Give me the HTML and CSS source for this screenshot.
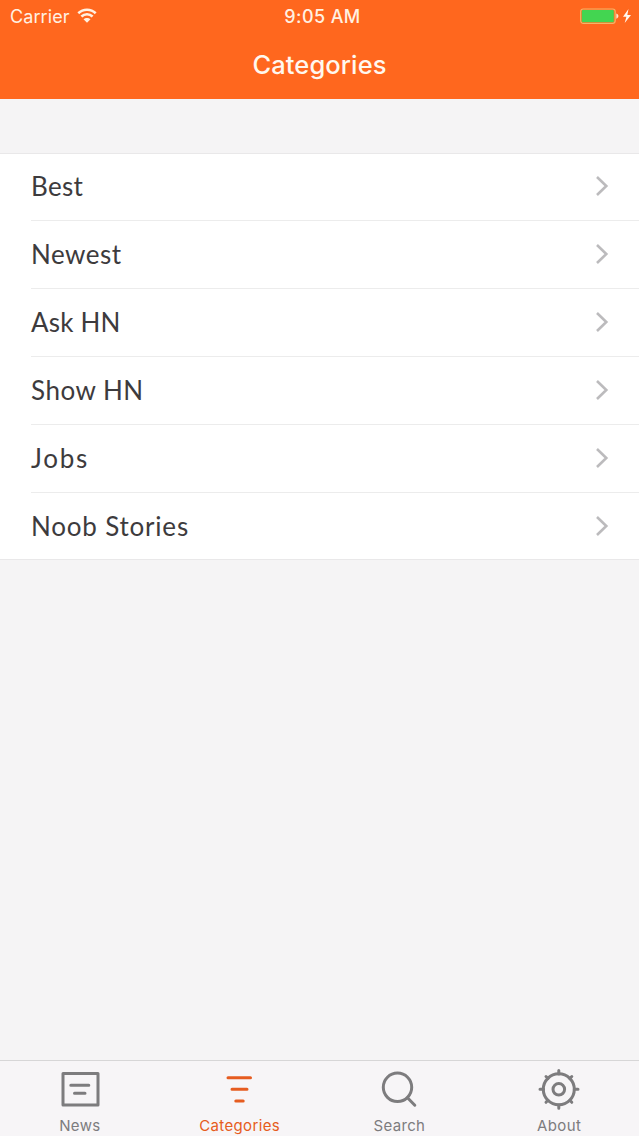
FILE: index.html
```html
<!DOCTYPE html>
<html lang="en">
<head>
<meta charset="utf-8">
<title>Categories</title>
<link rel="stylesheet" href="styles.css">
</head>
<body>
<div class="app">
  <header class="header">
    <div class="status">
      <div class="carrier"><span>Carrier</span>
        <svg class="wifi" width="20" height="15" viewBox="0 0 20 15" fill="none" stroke="currentColor" stroke-width="2.6"><path d="M1.3 5.2C6.2.5 13.800.5 18.700 5.200M4.400 8.500c3.200-3.100 8-3.100 11.200 0"/><path d="M10 14.800 6.500 11.300c2-1.900 5-1.900 7 0Z" fill="currentColor" stroke="none"/></svg>
      </div>
      <div class="time">9:05 AM</div>
      <div class="power">
        <svg width="52" height="17" viewBox="0 0 52 17"><rect x="1.7" y="1" width="34.500" height="14.300" rx="2.500" fill="none" stroke="#f3b568" stroke-width="1.2"/><rect x="2.800" y="2" width="32" height="12.300" rx="1" fill="#43d551"/><path d="M37.300 5.500c2.800 1 2.800 4.200 0 5.200Z" fill="#ffe5cc"/><path d="M49.500 1 44 8.700h3.400L45.700 15 52 6.900h-3.700Z" fill="#fff8f0"/></svg>
      </div>
    </div>
    <h1 class="title">Categories</h1>
  </header>
  <main class="content">
    <ul class="list">
      <li class="row"><span class="label best">Best</span><svg class="chevron" viewBox="0 0 14 22"><path d="m2 2 9.300 9L2 20"/></svg></li>
      <li class="row"><span class="label newest">Newest</span><svg class="chevron" viewBox="0 0 14 22"><path d="m2 2 9.300 9L2 20"/></svg></li>
      <li class="row"><span class="label ask">Ask HN</span><svg class="chevron" viewBox="0 0 14 22"><path d="m2 2 9.300 9L2 20"/></svg></li>
      <li class="row"><span class="label show">Show HN</span><svg class="chevron" viewBox="0 0 14 22"><path d="m2 2 9.300 9L2 20"/></svg></li>
      <li class="row"><span class="label jobs">Jobs</span><svg class="chevron" viewBox="0 0 14 22"><path d="m2 2 9.300 9L2 20"/></svg></li>
      <li class="row"><span class="label noob">Noob Stories</span><svg class="chevron" viewBox="0 0 14 22"><path d="m2 2 9.300 9L2 20"/></svg></li>
    </ul>
  </main>
  <nav class="tabs">
    <div class="tab"><svg class="icon" viewBox="0 0 44 44"><path stroke-linejoin="round" d="M5 6.500h35v31.500H5Z"/><path stroke-linecap="round" d="M12.800 18.300h18M16.500 26.200h10.500"/></svg><span>News</span></div>
    <div class="tab active"><svg class="icon" viewBox="0 0 44 44"><path stroke-linecap="round" d="M10 10.800h22.500M14 22.300h15M17.800 34h7.400"/></svg><span>Categories</span></div>
    <div class="tab"><svg class="icon" viewBox="0 0 44 44"><circle cx="20.500" cy="20.300" r="14.200"/><path stroke-linecap="round" d="m30.500 30.700 7.300 7.500"/></svg><span>Search</span></div>
    <div class="tab"><svg class="icon" viewBox="0 0 44 44"><circle cx="21.800" cy="22.300" r="15.500"/><circle cx="21.800" cy="22.300" r="5.800"/><path stroke-linecap="round" d="M21.800 7V3.500M21.800 38v3.300M6.500 22.300H3M37.300 22.300H41M11 11.500 9 9.500M32.800 11.500l2-2M11 33.300l-2 2M32.800 33.300l2 2"/></svg><span>About</span></div>
  </nav>
</div>
</body>
</html>
```
FILE: styles.css
```css
* { box-sizing: border-box; }
body { margin: 0; font-family: Inter, "Liberation Sans", sans-serif; }
.app { width: 639px; height: 1136px; display: flex; flex-direction: column; background: #f5f4f5; }
.header { height: 99px; background: #ff671e; color: #fff1e2; }
.status { height: 32px; display: grid; grid-template-columns: 1fr auto 1fr; align-items: center; font-size: 18px; }
.carrier { display: flex; align-items: center; gap: 7px; padding-left: 10px; letter-spacing: .1px; }
.wifi { margin-top: -2px; }
.time { font-weight: 500; letter-spacing: .4px; padding-left: 6px; }
.power { display: flex; justify-content: flex-end; padding-right: 8px; }
.title { margin: 0; height: 67px; line-height: 66px; text-align: center; font-size: 25.5px; font-weight: 500; letter-spacing: .1px; color: #fff8ef; }
.content { flex: 1; padding-top: 54px; }
.list { margin: 0; padding: 0; list-style: none; background: #fff; box-shadow: 0 1px #e9e8e9; border-top: 1px solid #e9e8e9; }
.row { height: 68px; margin-left: 31px; padding: 0 30px 1px 0; display: flex; align-items: center; justify-content: space-between; border-bottom: 1px solid #ececec; }
.row:first-child { height: 67px; padding-bottom: 2px; }
.row:last-child { height: 66px; border-bottom: 0; padding-bottom: 0; }
.label { font: 400 26px Lato, sans-serif; color: #3d3b3d; letter-spacing: .6px; }
.best { letter-spacing: .3px; }
.newest { letter-spacing: .5px; }
.ask { letter-spacing: .2px; }
.show { letter-spacing: .5px; }
.jobs { letter-spacing: 1.7px; }
.noob { letter-spacing: .8px; }
.chevron { width: 14px; height: 22px; fill: none; stroke: #bcbbbd; stroke-width: 2.6; }
.tabs { height: 76px; display: grid; grid-template-columns: repeat(4, 1fr); border-top: 1px solid #d7d6d7; background: #f7f5f7; }
.tab { display: flex; flex-direction: column; align-items: center; padding-top: 6px; color: #7d7c7e; font-size: 15px; line-height: 19px; letter-spacing: .35px; }
.icon { width: 44px; height: 44px; margin-bottom: 5px; fill: none; stroke: currentColor; stroke-width: 3; }
.active { color: #e65c20; }
```
